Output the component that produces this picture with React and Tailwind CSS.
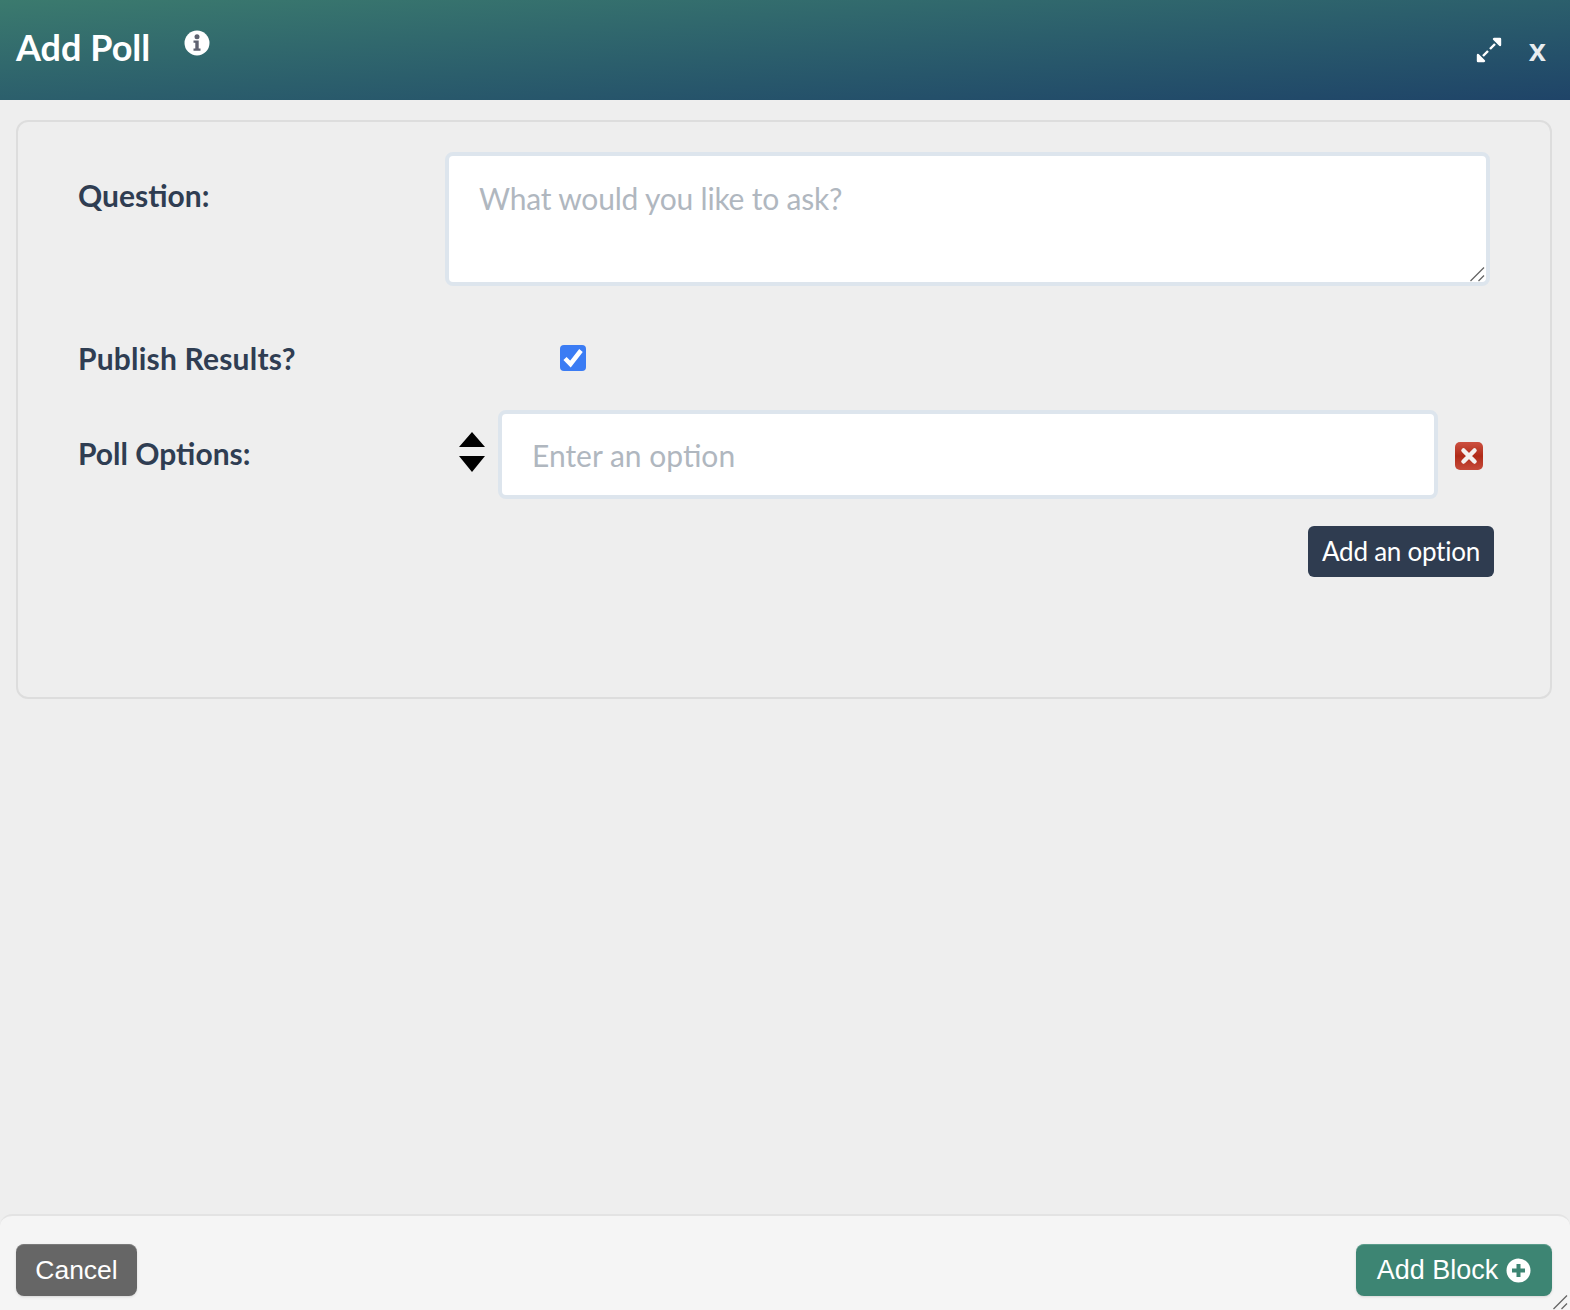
import React from "react";

function InfoIcon() {
  return (
    <svg width="26" height="26" viewBox="0 0 26 26" className="ml-[34px] mt-[-8px]">
      <circle cx="13" cy="13" r="12.5" fill="#fff" />
      <circle cx="13" cy="6.8" r="2.5" fill="#5f6270" />
      <path d="M9.5 10.5h5.2v8h1.8v2.3H9.5v-2.3h1.8v-5.7H9.5z" fill="#5f6270" />
    </svg>
  );
}

function ExpandIcon() {
  return (
    <svg width="26" height="26" viewBox="0 0 26 26" fill="#fff" stroke="#fff" strokeWidth="2.4">
      <path d="M18 2h6v6z" strokeLinejoin="round" />
      <path d="M19 7 14 12" />
      <path d="M8 24H2v-6z" strokeLinejoin="round" />
      <path d="M7 19l5-5" />
    </svg>
  );
}

function Grip({ className }) {
  return (
    <svg width="16" height="16" viewBox="0 0 16 16" className={className} fill="none" stroke="#666" strokeWidth="1.3">
      <path d="M1.5 15 15 1.5M9.5 15 15 9.5" />
    </svg>
  );
}

export default function App() {
  return (
    <div className="relative flex h-[1310px] w-[1570px] flex-col overflow-hidden bg-[#eeeeee] font-['Lato',sans-serif]">
      <div className="flex h-[100px] shrink-0 items-center justify-between bg-linear-to-br from-[#3b7a6e] to-[#1f4468] pl-4 pr-[24px]">
        <div className="flex items-center pb-[6px]">
          <h1 className="text-[36px] font-bold text-white">Add Poll</h1>
          <InfoIcon />
        </div>
        <div className="flex items-center gap-[27px]">
          <ExpandIcon />
          <span className="font-['Liberation_Sans',sans-serif] text-[31px] font-bold leading-none text-[#e8edf0]">x</span>
        </div>
      </div>

      <div className="ml-4 mr-[18px] mt-5 h-[579px] rounded-xl border-2 border-[#dddddd] pl-[60px] pr-[60px] pt-[30px]">
        <div className="flex">
          <label className="w-[367px] shrink-0 pt-[20px] text-[30px] font-bold leading-[46px] text-[#2f3d52]">Question:</label>
          <div className="relative flex-1">
            <textarea
              placeholder="What would you like to ask?"
              className="block h-[134px] w-full resize-none rounded-lg border-4 border-[#dde5ed] bg-white px-[30px] py-[20px] text-[30px] leading-[45px] tracking-[-0.2px] text-[#2d3748] outline-none placeholder:text-[#b0b7bf]"
            />
            <Grip className="absolute bottom-[4px] right-[5px]" />
          </div>
        </div>

        <div className="mt-[56px] flex h-[30px] items-center">
          <label className="w-[482px] shrink-0 pt-[2px] text-[30px] font-bold tracking-[0.2px] text-[#2f3d52]">Publish Results?</label>
          <span className="relative mt-[2px] block h-[26px] w-[26px]">
            <input type="checkbox" defaultChecked className="block h-[26px] w-[26px] appearance-none rounded-[4px] bg-[#3b7cf4]" />
            <svg viewBox="0 0 26 26" className="pointer-events-none absolute inset-0" fill="none" stroke="#fff" strokeWidth="4.5">
              <path d="M5 13.5 10.5 19 21 5.5" />
            </svg>
          </span>
        </div>

        <div className="mt-[38px] flex items-center">
          <label className="w-[381px] shrink-0 pb-[2px] text-[30px] font-bold text-[#2f3d52]">Poll Options:</label>
          <svg width="26" height="40" viewBox="0 0 26 40" className="mb-[6px] shrink-0">
            <path d="M13 0 26 15H0zM0 24h26L13 40z" fill="#000" />
          </svg>
          <input
            placeholder="Enter an option"
            className="ml-[13px] h-[89px] w-[940px] shrink-0 rounded-lg border-4 border-[#dde5ed] bg-white px-[30px] text-[30px] text-[#2d3748] outline-none placeholder:text-[#b0b7bf]"
          />
          <button className="ml-[17px] mt-[2px] flex h-[28px] w-[28px] shrink-0 items-center justify-center rounded-[5px] bg-linear-to-b from-[#cc5040] via-[#b02a17] to-[#c64a39]">
            <svg width="18" height="18" viewBox="0 0 18 18" fill="none" stroke="#f4f1ef" strokeWidth="4.5" strokeLinecap="round">
              <path d="M3.5 3.5 14.5 14.5M14.5 3.5 3.5 14.5" />
            </svg>
          </button>
        </div>

        <div className="-mr-1 mt-[27px] flex justify-end">
          <button className="h-[51px] w-[186px] rounded-md bg-[#2f3c50] text-[26px] tracking-[-0.25px] text-white">Add an option</button>
        </div>
      </div>

      <div className="mt-auto flex h-[96px] items-end justify-between rounded-t-xl border-t-2 border-[#e3e3e3] bg-[#f5f5f5] pb-[14px] pl-4 pr-[18px] font-['Liberation_Sans',sans-serif]">
        <button className="h-[52px] w-[121px] rounded-lg border-t border-[#7a7a7a] bg-[#666666] text-[26.5px] text-white shadow-sm">Cancel</button>
        <button className="flex h-[52px] w-[196px] items-center justify-center gap-[8px] rounded-lg border-t border-[#5a9c8b] bg-[#3d8573] text-[27px] text-white shadow-sm">
          Add Block
          <svg width="25" height="25" viewBox="0 0 25 25">
            <circle cx="12.5" cy="12.5" r="12" fill="#fff" />
            <path d="M10.5 6h4v4.5H19v4h-4.5V19h-4v-4.5H6v-4h4.5z" fill="#3d8573" />
          </svg>
        </button>
      </div>

      <Grip className="absolute bottom-0 right-[2px]" />
    </div>
  );
}
